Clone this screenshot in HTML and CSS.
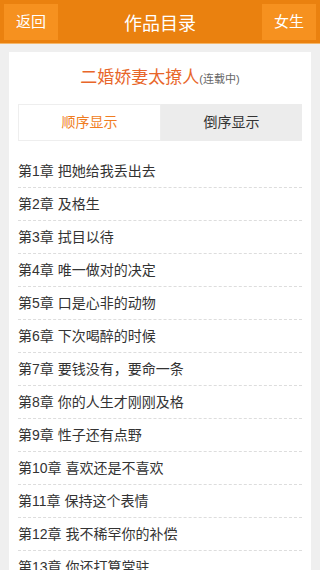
FILE: index.html
```html
<!DOCTYPE html>
<html lang="zh-CN">
<head>
  <meta charset="UTF-8">
  <title>作品目录</title>
  <link rel="stylesheet" href="styles.css">
</head>
<body>
  <div class="header">
    <a class="btn back">返回</a>
    <h1>作品目录</h1>
    <a class="btn">女生</a>
  </div>
  <div class="box">
    <div class="book_name">二婚娇妻太撩人<span>(连载中)</span></div>
    <div class="tabs">
      <a class="tab on">顺序显示</a>
      <a class="tab">倒序显示</a>
    </div>
    <ul class="chapters">
    </ul>
  </div>
  <script>
    var list = [
      '把她给我丢出去', '及格生', '拭目以待', '唯一做对的决定', '口是心非的动物',
      '下次喝醉的时候', '要钱没有，要命一条', '你的人生才刚刚及格', '性子还有点野',
      '喜欢还是不喜欢', '保持这个表情', '我不稀罕你的补偿', '你还打算常驻'
    ];
    var ul = document.querySelector('.chapters');
    list.forEach(function (name, i) {
      var li = document.createElement('li');
      li.innerHTML = '第' + (i + 1) + '章 ' + name;
      ul.appendChild(li);
    })
  </script>
</body>
</html>
```

FILE: styles.css
```css
* {
  padding: 0;
  margin: 0;
}
body {
  background-color: #efefef;
  font-family: "Liberation Sans", "Noto Sans CJK SC", sans-serif;
  color: #333;
}
.header {
  height: 44px;
  padding: 0 4px;
  box-sizing: border-box;
  display: flex;
  align-items: center;
  justify-content: space-between;
  background-color: #ea810f;
  border-bottom: 1px solid #f4b66a;
}
.header h1 {
  font-size: 18px;
  font-weight: normal;
  color: #fff;
}
.btn {
  width: 54px;
  height: 36px;
  line-height: 36px;
  text-align: center;
  font-size: 15px;
  color: #fff;
  background-color: #f6911f;
}
.box {
  margin: 8px 9px 0;
  padding: 14px 9px 0;
  background-color: #fff;
}
.book_name {
  height: 24px;
  line-height: 24px;
  text-align: center;
  font-size: 17px;
  color: #e8662a;
}
.book_name span {
  font-size: 11px;
  color: #666;
}
.tabs {
  display: flex;
  margin-top: 14px;
}
.tab {
  flex: 1;
  height: 37px;
  line-height: 37px;
  text-align: center;
  font-size: 14px;
  color: #333;
  background-color: #ececec;
}
.tab.on {
  color: #f07d22;
  background-color: #fff;
  border: 1px solid #eee;
  line-height: 35px;
  box-sizing: border-box;
}
.chapters {
  list-style: none;
  margin-top: 14px;
}
.chapters li {
  height: 32px;
  line-height: 32px;
  font-size: 14px;
  border-bottom: 1px dashed #ddd;
}
```
